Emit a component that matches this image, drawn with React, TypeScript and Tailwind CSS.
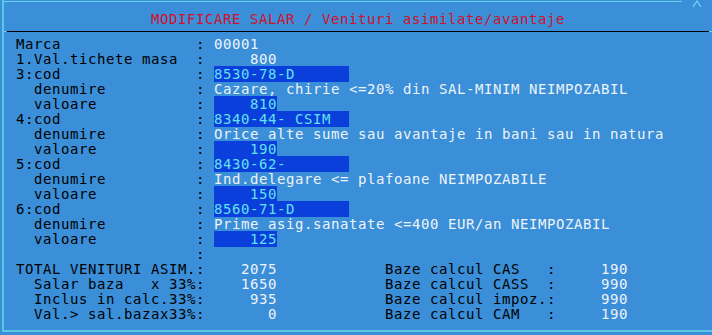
type Kind = "l" | "v" | "h";
type Seg = [string, Kind];

const kindClass: Record<Kind, string> = {
  l: "text-black",
  v: "text-[#eef3f8]",
  h: "bg-[#0b3fdc] text-[#62e2f0]",
};

const pad = (s: string, n: number) => s + " ".repeat(Math.max(0, n - s.length));
const lpad = (s: string, n: number) => " ".repeat(Math.max(0, n - s.length)) + s;

// label column is 20 chars, then ": ", value column starts at col 22
const field = (label: string, value: string, kind: Kind = "v"): Seg[] => [
  [pad(label, 20) + ": ", "l"],
  [value, kind],
];

const codBlock = (n: number, cod: string, den: string, val: string): Seg[][] => [
  field(`${n}:cod`, pad(cod, 15), "h"),
  field("  denumire", den),
  field("  valoare", lpad(val, 7), "h"),
];

const summary = (label: string, value: string, right: string, rvalue: string): Seg[] => [
  [pad(label, 20) + ":", "l"],
  [lpad(value, 8), "v"],
  [" ".repeat(12) + pad(right, 18) + ":", "l"],
  [lpad(rvalue, 8), "v"],
];

const rows: Seg[][] = [
  field("Marca", "00001"),
  field("1.Val.tichete masa", lpad("800", 7)),
  ...codBlock(3, "8530-78-D", "Cazare, chirie <=20% din SAL-MINIM NEIMPOZABIL", "810"),
  ...codBlock(4, "8340-44- CSIM", "Orice alte sume sau avantaje in bani sau in natura", "190"),
  ...codBlock(5, "8430-62-", "Ind.delegare <= plafoane NEIMPOZABILE", "150"),
  ...codBlock(6, "8560-71-D", "Prime asig.sanatate <=400 EUR/an NEIMPOZABIL", "125"),
  [[pad("", 20) + ":", "l"]],
  summary("TOTAL VENITURI ASIM.", "2075", "Baze calcul CAS", "190"),
  summary("  Salar baza   x 33%", "1650", "Baze calcul CASS", "990"),
  summary("  Inclus in calc.33%", "935", "Baze calcul impoz.", "990"),
  summary("  Val.> sal.bazax33%", "0", "Baze calcul CAM", "190"),
];

export default function App() {
  return (
    <div
      className="w-[712px] h-[335px] overflow-hidden bg-[#3a8fd8] pl-[2px] text-[14px] tracking-[0.57px]"
      style={{ fontFamily: '"DejaVu Sans Mono", monospace' }}
    >
      <div className="h-[332px] flex flex-col border-l-2 border-b-2 border-[#5cc8e6]">
        {/* top frame line with scroll caret */}
        <div className="h-[8px] flex items-start">
          <div className="mt-[1px] w-[678px] h-[1px] bg-[#6ad4ee]" />
          <svg className="ml-[10px]" width="10" height="8" viewBox="0 0 10 8">
            <polyline points="1,7 5,1 9,7" fill="none" stroke="#6ad4ee" strokeWidth="1.3" />
          </svg>
        </div>

        {/* title */}
        <div className="h-[23px] flex items-center justify-center pb-[1px] text-[#d4102c] whitespace-pre">
          MODIFICARE SALAR / Venituri asimilate/avantaje
        </div>

        {/* separator */}
        <div className="h-[1px] flex">
          <div className="w-[2px] bg-[#6ad4ee]" />
          <div className="ml-[1px] w-[702px] bg-black" />
          <div className="w-[3px] bg-[#6ad4ee]" />
        </div>

        {/* body */}
        <div className="pl-[12px] pt-[5px] flex flex-col">
          {rows.map((segs, i) => (
            <div key={i} className="h-[15px] leading-[15px] whitespace-pre">
              {segs.map(([text, kind], j) => (
                <span key={j} className={kindClass[kind]}>
                  {text}
                </span>
              ))}
            </div>
          ))}
        </div>
      </div>
    </div>
  );
}
